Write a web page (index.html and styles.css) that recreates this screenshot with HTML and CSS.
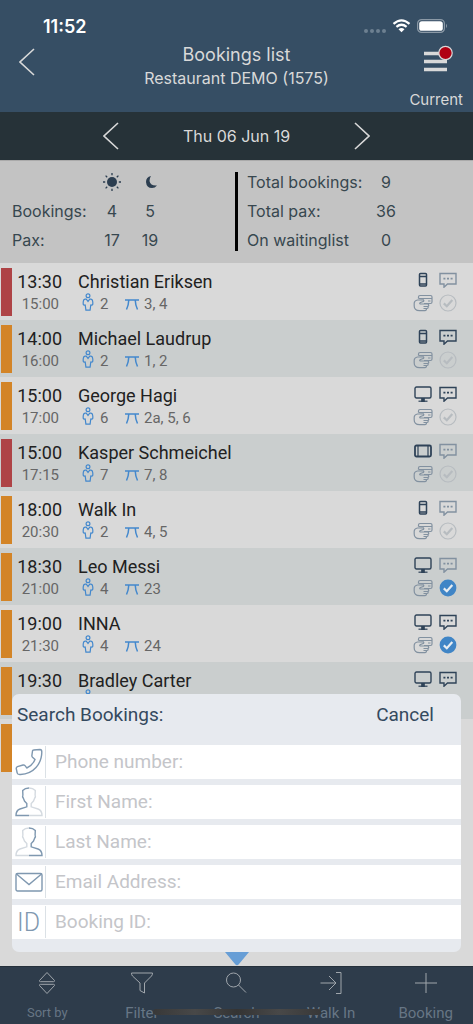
FILE: index.html
```html
<!DOCTYPE html>
<html lang="en">
<head>
<meta charset="utf-8">
<meta name="viewport" content="width=device-width, initial-scale=1">
<title>Bookings list</title>
<link rel="stylesheet" href="styles.css">
</head>
<body>
<svg class="sprite" aria-hidden="true">
  <symbol id="person" viewBox="0 0 12 18"><circle cx="6" cy="2.700" r="1.900"/><path d="M6 8.500 4.300 6.200H3Q1.200 6.600 1.200 9V11.200Q1.600 12.300 3.200 12L3.900 17.200H8.100L8.800 12Q10.400 12.300 10.800 11.200V9Q10.800 6.600 9 6.200H7.700Z"/></symbol>
  <symbol id="table" viewBox="0 0 14 12"><path d="M0 2H14M3.800 2Q3.600 7 1.500 11.500M10.200 2Q10.400 7 12.500 11.500" stroke-width="1.500"/></symbol>
  <symbol id="phone" viewBox="0 0 18 16"><rect x="5.500" y="1.500" width="7" height="12.500" rx="1" stroke-width="1.500"/><path d="M5.500 4.500H12.500M5.500 12H12.500" stroke-width="1.400"/></symbol>
  <symbol id="desktop" viewBox="0 0 18 16"><rect x="1" y="1" width="16" height="11" rx="1.500" stroke-width="1.400"/><path d="M4.500 15.200H13.500"/><path d="M7.800 12.500H10.200V15.500H7.800Z" fill="currentColor"/></symbol>
  <symbol id="tablet" viewBox="0 0 18 16"><rect x="1" y="2.500" width="16" height="11" rx="1.500" stroke-width="1.800"/><path d="M4 2.500V13.500M14 2.500V13.500"/></symbol>
  <symbol id="chat" viewBox="0 0 18 16"><path d="M1 1.500H17V12H8.500L5 15.200V12H1Z" stroke-width="1.400"/><path d="M4.400 6.700H6.400M8 6.700H10M11.600 6.700H13.600" stroke-width="1.800"/></symbol>
  <symbol id="hand" viewBox="0 0 20 18"><path d="M5.500 4.500V3Q5.500 1.500 7 1.500H17.500Q19 1.500 19 3V8Q19 9.500 17.500 9.500H11M5.500 4.500H19M15 7H17.500M1.200 9Q1.500 6.500 4.500 6L10.500 5.800Q11.500 7 9.500 7.800L7 8.800Q6 10 8 10H15Q16.500 11.300 15 12.500H10.500M15 12.500Q15.500 14.500 14 14.500H10.500M13.500 14.500Q13.500 16.700 12 16.700H6.500Q1.200 16.500 1.200 12V9"/></symbol>
  <symbol id="tick" viewBox="0 0 18 18"><circle cx="9" cy="9" r="8"/><path d="M4.800 9.400 7.800 12.200 13.300 6" stroke-width="2.200"/></symbol>
  <symbol id="tick-on" viewBox="0 0 18 18"><circle cx="9" cy="9" r="8.400" fill="#4085c6" stroke="none"/><path d="M4.800 9.400 7.800 12.200 13.300 6" stroke="#e8edf2" stroke-width="2.200"/></symbol>
  <symbol id="left" viewBox="0 0 16 28"><path d="M15 1 1 14 15 27"/></symbol>
  <symbol id="head" viewBox="0 0 28 30"><path d="M14 1Q10 1 7.700 3.500L7.900 8Q7 9.500 8.500 11.500L9.500 14 11.800 16.500V19.800L5 22Q1 23.500 1 28.500H14"/></symbol>
</svg>

<div class="screen">
  <header class="header">
    <div class="status">
      <span class="clock">11:52</span>
      <span class="signals">
        <svg class="dots" viewBox="0 0 22 4"><circle cx="2" cy="2" r="2"/><circle cx="8" cy="2" r="2"/><circle cx="14" cy="2" r="2"/><circle cx="20" cy="2" r="2"/></svg>
        <svg class="wifi" viewBox="0 0 18 14"><path d="M1 4.800Q9-2.200 17 4.800M3.900 7.900Q9 3.600 14.100 7.900" fill="none" stroke="#fff" stroke-width="2.200"/><path d="M6 10.200Q9 7.800 12 10.200L9 13.300Z" fill="#fff"/></svg>
        <svg class="battery" viewBox="0 0 31 14"><rect x=".6" y=".6" width="26.800" height="12.800" rx="4" fill="none" stroke="#8b99a6" stroke-width="1.200"/><rect x="2.200" y="2.200" width="23.600" height="9.600" rx="2.600" fill="#fff"/><path d="M29 4.800Q31 7 29 9.200Z" fill="#8b99a6"/></svg>
      </span>
    </div>
    <div class="nav">
      <button class="plain back" aria-label="Back"><svg class="arrow"><use href="#left"/></svg></button>
      <div class="titles">
        <h1>Bookings list</h1>
        <p>Restaurant DEMO (1575)</p>
      </div>
      <div class="nav-end">
        <button class="plain menu" aria-label="Menu"><svg viewBox="0 0 30 28"><path d="M1 8.500H24M1 16.500H24M1 24.500H24" stroke="#d9d9d9" stroke-width="3.400"/><circle cx="22.500" cy="8" r="6.700" fill="#b00012" stroke="#d9d9d9"/></svg></button>
        <span class="current">Current</span>
      </div>
    </div>
  </header>

  <div class="datebar">
    <button class="plain" aria-label="Previous day"><svg class="arrow"><use href="#left"/></svg></button>
    <span class="date">Thu 06 Jun 19</span>
    <button class="plain" aria-label="Next day"><svg class="arrow flip"><use href="#left"/></svg></button>
  </div>

  <section class="summary">
    <div class="split">
      <span></span>
      <svg class="sky" viewBox="0 0 20 20"><circle cx="10" cy="10" r="5" fill="#2c3e50"/><path d="M10 1V3.200M10 16.800V19M1 10H3.200M16.800 10H19M3.600 3.600 5.200 5.200M14.800 14.800 16.400 16.400M3.600 16.400 5.200 14.800M14.800 5.200 16.400 3.600" stroke="#2c3e50" stroke-width="1.300"/></svg>
      <svg class="sky" viewBox="0 0 20 20"><path d="M11 4Q6 5 6 10Q6.500 16 12 16Q15 16 17 13.500Q10.500 14 9.500 9Q9.500 6 11 4Z" fill="#2c3e50"/></svg>
      <span>Bookings:</span><span class="num">4</span><span class="num">5</span>
      <span>Pax:</span><span class="num">17</span><span class="num">19</span>
    </div>
    <span class="divider"></span>
    <div class="totals">
      <span>Total bookings:</span><span class="num">9</span>
      <span>Total pax:</span><span class="num">36</span>
      <span>On waitinglist</span><span class="num">0</span>
    </div>
  </section>

  <main class="list">
    <article class="row red">
      <div class="times"><b>13:30</b><span>15:00</span></div>
      <div class="guest"><h2>Christian Eriksen</h2><p><svg class="pi"><use href="#person"/></svg><span class="pax">2</span><svg class="ti"><use href="#table"/></svg>3, 4</p></div>
      <div class="flags"><svg><use href="#phone"/></svg><svg class="mid"><use href="#chat"/></svg><svg class="mid"><use href="#hand"/></svg><svg class="dim"><use href="#tick"/></svg></div>
    </article>
    <article class="row">
      <div class="times"><b>14:00</b><span>16:00</span></div>
      <div class="guest"><h2>Michael Laudrup</h2><p><svg class="pi"><use href="#person"/></svg><span class="pax">2</span><svg class="ti"><use href="#table"/></svg>1, 2</p></div>
      <div class="flags"><svg><use href="#phone"/></svg><svg><use href="#chat"/></svg><svg class="mid"><use href="#hand"/></svg><svg class="dim"><use href="#tick"/></svg></div>
    </article>
    <article class="row">
      <div class="times"><b>15:00</b><span>17:00</span></div>
      <div class="guest"><h2>George Hagi</h2><p><svg class="pi"><use href="#person"/></svg><span class="pax">6</span><svg class="ti"><use href="#table"/></svg>2a, 5, 6</p></div>
      <div class="flags"><svg><use href="#desktop"/></svg><svg><use href="#chat"/></svg><svg class="mid"><use href="#hand"/></svg><svg class="dim"><use href="#tick"/></svg></div>
    </article>
    <article class="row red">
      <div class="times"><b>15:00</b><span>17:15</span></div>
      <div class="guest"><h2>Kasper Schmeichel</h2><p><svg class="pi"><use href="#person"/></svg><span class="pax">7</span><svg class="ti"><use href="#table"/></svg>7, 8</p></div>
      <div class="flags"><svg><use href="#tablet"/></svg><svg class="mid"><use href="#chat"/></svg><svg class="mid"><use href="#hand"/></svg><svg class="dim"><use href="#tick"/></svg></div>
    </article>
    <article class="row">
      <div class="times"><b>18:00</b><span>20:30</span></div>
      <div class="guest"><h2>Walk In</h2><p><svg class="pi"><use href="#person"/></svg><span class="pax">2</span><svg class="ti"><use href="#table"/></svg>4, 5</p></div>
      <div class="flags"><svg><use href="#phone"/></svg><svg class="mid"><use href="#chat"/></svg><svg class="mid"><use href="#hand"/></svg><svg class="dim"><use href="#tick"/></svg></div>
    </article>
    <article class="row">
      <div class="times"><b>18:30</b><span>21:00</span></div>
      <div class="guest"><h2>Leo Messi</h2><p><svg class="pi"><use href="#person"/></svg><span class="pax">4</span><svg class="ti"><use href="#table"/></svg>23</p></div>
      <div class="flags"><svg><use href="#desktop"/></svg><svg class="mid"><use href="#chat"/></svg><svg class="mid"><use href="#hand"/></svg><svg><use href="#tick-on"/></svg></div>
    </article>
    <article class="row">
      <div class="times"><b>19:00</b><span>21:30</span></div>
      <div class="guest"><h2>INNA</h2><p><svg class="pi"><use href="#person"/></svg><span class="pax">4</span><svg class="ti"><use href="#table"/></svg>24</p></div>
      <div class="flags"><svg><use href="#desktop"/></svg><svg><use href="#chat"/></svg><svg class="mid"><use href="#hand"/></svg><svg><use href="#tick-on"/></svg></div>
    </article>
    <article class="row">
      <div class="times"><b>19:30</b></div>
      <div class="guest"><h2>Bradley Carter</h2><p><svg class="pi"><use href="#person"/></svg></p></div>
      <div class="flags"><svg><use href="#desktop"/></svg><svg><use href="#chat"/></svg></div>
    </article>
    <article class="row"></article>
  </main>

  <form class="panel">
    <div class="panel-head"><h2>Search Bookings:</h2><button type="button" class="plain cancel">Cancel</button></div>
    <label class="field"><span class="icon"><svg viewBox="0 0 28 28"><path d="M18.500 2 25 1.500Q26.800 1.500 26.800 4Q26.800 13 21 19.500T5.500 26.500Q2.500 26.800 2.200 25L1.200 20.500Q1.200 19.300 2.500 18.700L8 17Q9.200 16.700 10 17.600L11.800 20Q17.500 17.500 20 11.500L17.500 9.300Q16.700 8.500 16.900 7.300L17.500 3Q17.700 2 18.500 2Z"/></svg></span><input type="text" aria-label="Phone number" placeholder="Phone number:"></label>
    <label class="field"><span class="icon"><svg viewBox="0 0 28 30"><use href="#head"/><use class="pale" href="#head" transform="translate(28 0) scale(-1 1)"/></svg></span><input type="text" aria-label="First name" placeholder="First Name:"></label>
    <label class="field"><span class="icon"><svg viewBox="0 0 28 30"><use class="pale" href="#head"/><use href="#head" transform="translate(28 0) scale(-1 1)"/></svg></span><input type="text" aria-label="Last name" placeholder="Last Name:"></label>
    <label class="field"><span class="icon"><svg viewBox="0 0 28 28"><rect x="1" y="5.500" width="26" height="17.500" rx="1.500"/><path d="M1.500 6 14 16.500 26.500 6"/></svg></span><input type="text" aria-label="Email address" placeholder="Email Address:"></label>
    <label class="field"><span class="icon id">ID</span><input type="text" aria-label="Booking ID" placeholder="Booking ID:"></label>
    <svg class="pointer" viewBox="0 0 24 14"><path d="M0 0H24L14 12Q12 14.500 10 12Z" fill="#679ed6"/></svg>
  </form>

  <nav class="tabs">
    <button class="plain tab small"><svg viewBox="0 0 24 24"><path d="M12 1.500 19.500 9.500Q19.700 10.700 18.500 10.700H5.500Q4.300 10.700 4.500 9.500ZM12 22.500 19.500 14.500Q19.700 13.300 18.500 13.300H5.500Q4.300 13.300 4.500 14.500Z"/></svg>Sort by</button>
    <button class="plain tab"><svg viewBox="0 0 24 24"><path d="M1.500 2H22.500Q22.500 4 21.500 5L14.500 12V22L10 19.500V12L2.500 5Q1.500 4 1.500 2Z"/></svg>Filter</button>
    <button class="plain tab"><svg viewBox="0 0 24 24"><circle cx="9.500" cy="9" r="7"/><path d="M14.500 14 22 21.500"/></svg>Search</button>
    <button class="plain tab"><svg viewBox="0 0 24 24"><path d="M1.500 12H17M10 5 17 12 10 19M17 1.500H22V22.500H17"/></svg>Walk In</button>
    <button class="plain tab"><svg viewBox="0 0 24 24"><path d="M12 2V22M1 12H23"/></svg>Booking</button>
    <span class="home"></span>
  </nav>
</div>
</body>
</html>
```

FILE: styles.css
```css
* { box-sizing: border-box; }
body, h1, h2, p { margin: 0; font-weight: 400; }
body { font-family: Roboto, "Noto Sans", sans-serif; }
svg { display: block; fill: none; stroke: currentColor; stroke-width: 1.2; }
.sprite { position: absolute; width: 0; height: 0; }
.plain { border: 0; padding: 0; background: none; font: inherit; color: inherit; cursor: pointer; }

.screen {
  position: relative;
  display: flex;
  flex-direction: column;
  height: 100vh;
  overflow: hidden;
  background: #d9d9d9;
}

.header, .datebar, .summary { font-family: Inter, "Noto Sans", sans-serif; }
.header { background: #364e64; color: #d9d9d9; }
.status {
  display: flex;
  justify-content: space-between;
  align-items: center;
  height: 44px;
  padding: 8px 25px 0 43px;
}
.clock { font-size: 18px; font-weight: 600; color: #fff; }
.signals { display: flex; align-items: center; gap: 6px; }
.signals svg { stroke: none; }
.dots { width: 22px; height: 4px; margin-top: 9px; fill: #6d8091; }
.wifi { width: 19px; height: 14px; }
.battery { width: 31px; height: 14px; }
.nav {
  display: grid;
  grid-template-columns: 1fr auto 1fr;
  height: 68px;
}
.back { justify-self: start; align-self: start; padding: 4px 0 0 19px; }
.arrow { width: 16px; height: 28px; stroke-width: 1.6; color: #d9d9d9; }
.flip { transform: scaleX(-1); }
.titles { text-align: center; }
.titles h1 { font-size: 18px; line-height: 22px; }
.titles p { font-size: 16px; line-height: 24px; }
.nav-end { display: flex; flex-direction: column; align-items: flex-end; gap: 15px; padding: 1px 10px 0 0; }
.menu { margin-right: 10px; }
.menu svg { width: 30px; height: 28px; }
.current { font-size: 15px; line-height: 24px; }

.datebar {
  display: flex;
  justify-content: center;
  align-items: center;
  gap: 64px;
  height: 48px;
  background: #263238;
  color: #d9d9d9;
  font-size: 16px;
}
.date { text-align: center; }

.summary {
  display: grid;
  grid-template-columns: 1fr 3px 1fr;
  padding: 6px 0 8px;
  border-top: 1px solid #aaa;
  background: #c3c3c3;
  color: #37474f;
  font-size: 16px;
}
.split, .totals { display: grid; grid-auto-rows: 1fr; align-items: center; height: 88px; }
.split { grid-template-columns: 81px 38px 38px; padding-left: 12px; }
.totals { grid-template-columns: 120px 38px; padding-left: 9px; }
.divider { margin: 5px 0 4px; background: #000; }
.sky { justify-self: center; width: 20px; height: 20px; stroke: none; }
.num { text-align: center; }

.list { flex: 1; min-height: 0; overflow: hidden; }
.row {
  display: grid;
  grid-template-columns: 61px 1fr auto;
  height: 57px;
  padding: 7px 16px 0 1px;
  background: linear-gradient(#d38427, #d38427) 1px 5px / 11px 48px no-repeat #d9d9d9;
  color: #212121;
}
.row:nth-child(even) { background-color: #cacece; }
.row.red { background-image: linear-gradient(#ae4346, #ae4346); }
.times { display: flex; flex-direction: column; align-items: flex-end; }
.times b { font-size: 18px; line-height: 24px; font-weight: 400; }
.times span { padding-right: 3px; font-size: 15px; line-height: 20px; color: #666; }
.guest { padding-left: 16px; }
.guest h2 { font-size: 18px; line-height: 24px; }
.guest p { display: flex; align-items: center; font-size: 15px; line-height: 20px; color: #666; }
.pi { width: 12px; height: 18px; margin: -4px 6px 0 4px; color: #4388cd; }
.pax { width: 25px; }
.ti { width: 14px; height: 12px; margin-right: 5px; color: #4388cd; }
.flags {
  display: grid;
  grid-template-columns: 20px 18px;
  grid-template-rows: 16px 18px;
  gap: 6px;
  align-content: start;
  justify-items: center;
  padding-top: 2px;
  color: #2f4358;
}
.flags svg { width: 100%; height: 100%; }
.flags .mid { color: #8291a0; }
.flags .dim { color: #b7bcc0; }

.panel {
  position: absolute;
  right: 12px;
  bottom: 72px;
  left: 12px;
  display: flex;
  flex-direction: column;
  gap: 6px;
  padding-bottom: 13px;
  border-radius: 7px;
  background: #e7eaef;
}
.panel-head {
  display: flex;
  justify-content: space-between;
  height: 45px;
  padding: 7px 27px 0 5px;
  color: #34495e;
  font-size: 19px;
  line-height: 28px;
}
.panel-head h2 { font-size: 19px; }
.cancel { align-self: flex-start; line-height: 28px; }
.field { display: flex; align-items: center; height: 34px; background: #fff; }
.icon {
  display: flex;
  justify-content: center;
  align-items: center;
  width: 34px;
  height: 32px;
  border-right: 1px solid #dbe1e6;
  color: #7f98b0;
}
.icon svg { width: 28px; height: 30px; stroke-width: 1.4; }
.pale { color: #d4dae0; }
.id { font-size: 25px; font-weight: 300; }
.field input {
  flex: 1;
  min-width: 0;
  padding: 0 9px;
  border: 0;
  outline: 0;
  background: none;
  color: #34495e;
  font: 19px/28px Roboto, "Noto Sans", sans-serif;
}
.field input::placeholder { color: #c4c5c9; opacity: 1; }
.pointer { position: absolute; top: 100%; left: 50%; width: 24px; height: 14px; margin-left: -12px; stroke: none; }

.tabs {
  position: relative;
  display: grid;
  grid-template-columns: repeat(5, 1fr);
  height: 58px;
  border-top: 1px solid #25303b;
  background: #2e3c4b;
}
.tab {
  display: flex;
  flex-direction: column;
  align-items: center;
  gap: 8px;
  padding-top: 4px;
  color: #677685;
  font-size: 15px;
  line-height: 20px;
}
.tab svg { width: 24px; height: 24px; color: #a0a6ac; stroke-width: 1; }
.small { font-size: 13px; }
.home {
  position: absolute;
  bottom: 9px;
  left: 50%;
  width: 168px;
  height: 6px;
  margin-left: -84px;
  border-radius: 3px;
  background: linear-gradient(90deg, #383838, #484848, #343434, #484848, #383838);
}
```
